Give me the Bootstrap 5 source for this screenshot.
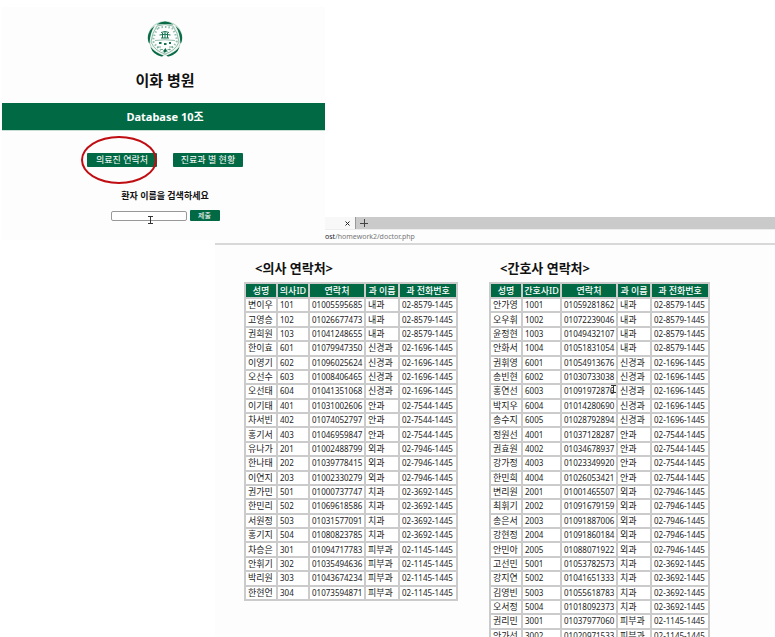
<!DOCTYPE html>
<html lang="ko">
<head>
<meta charset="utf-8">
<meta name="viewport" content="width=device-width, initial-scale=1">
<title>이화 병원</title>
<link href="https://cdn.jsdelivr.net/npm/bootstrap@5.3.0/dist/css/bootstrap.min.css" rel="stylesheet">
<style>
  :root { --ewha: #016a45; }
  body { font-family: "Noto Sans", "Noto Sans CJK KR", sans-serif; color: #111; background: #fff; }
  .desktop { min-height: 100vh; }
  .win-home { left: 2px; top: 7px; width: 323px; height: 233px; padding-top: 14px; background: #fdfdfd; z-index: 2; }
  .win-browser { left: 215px; top: 217px; right: 0; bottom: 0; background: #fdfdfd; }
  .hospital-name { font-size: 15px; line-height: 24px; margin: 11px 0; padding-left: 3px; }
  .team-band { background: var(--ewha); font-size: 11px; line-height: 28px; height: 28px; padding-left: 3px; border-bottom: 1px solid #c5dfd5; }
  .crest { padding-left: 3px; }
  .btn-ewha { background: var(--ewha); color: #fff; border: 0; border-radius: 1px; font-size: 9px; line-height: 14px; padding: 0; width: 70px; }
  .btn-ewha:hover { background: #01583a; color: #fff; }
  .btn-send { font-size: 7px; line-height: 11px; width: 30px; }
  .menu-row { gap: 16px; padding: 22px 0 0 3px; }
  .ring { left: -6px; top: -17px; width: 76px; height: 48px; border: 2px solid #c00d12; border-radius: 50%; pointer-events: none; }
  .search-label { font-size: 9px; line-height: 14px; margin-top: 22px; padding-left: 3px; }
  .search-box { width: 76px; height: 10px; border: 1px solid #999; border-radius: 2px; padding: 0 2px; font-size: 7px; background: #fff; }
  .search-row { gap: 3px; margin-top: 7px; padding-left: 3px; }
  .caret-home { left: 37px; top: 5px; }
  .tab-strip { height: 13px; background: #cacaca; border-bottom: 1px solid #eee; }
  .tab-on { width: 141px; background: #f8f8f8; border-right: 1px solid #999; padding-right: 5px; }
  .tab-btn { border: 0; background: none; padding: 0; line-height: 0; }
  .address { height: 15px; padding-left: 110px; font-size: 7px; line-height: 14px; color: #777; border-bottom: 2px solid #d8d8d8; }
  .address a { color: inherit; }
  .lists { gap: 31px; padding: 14px 0 0 29px; }
  .list-title { font-size: 13px; line-height: 18px; margin: 0 0 5px 11px; }
  .roster { table-layout: fixed; border-collapse: separate; border-spacing: 2px; background: #cbcbcb; color: #222; font-size: 8px; line-height: 12px; }
  .roster-doctor { width: 214px; height: 319px; }
  .roster-nurse { width: 221px; height: 362px; }
  .roster th, .roster td { padding: 0 0 0 2px; white-space: nowrap; vertical-align: middle; }
  .roster th { background: var(--ewha); color: #fff; font-size: 9px; font-weight: 500; text-align: center; padding: 0; height: 13px; }
  .roster td { background: #fff; }
  .roster .ko { font-size: 9px; }
  .c-name { width: 30px; } .c-id { width: 30px; } .c-nid { width: 37px; } .c-tel { width: 54px; } .c-dept { width: 32px; } .c-line { width: 56px; }
  .caret-list { left: 396px; top: 140px; }
</style>
<script src="https://cdn.jsdelivr.net/npm/bootstrap@5.3.0/dist/js/bootstrap.bundle.min.js"></script>
</head>
<body>
<main class="desktop position-relative overflow-hidden">

  <section class="win-home position-absolute text-center">
    <div class="crest">
    <svg class="d-block mx-auto" width="36" height="36" viewBox="0 0 36 36" fill="none" stroke="#2c805f" aria-label="이화" role="img">
      <path d="M9 3Q18-2 27 3Q34 7 35 16Q35 21 33 23Q31 32 22 35L18 33.500L14 35Q5 32 3 23Q1 21 1 16Q2 7 9 3Z" fill="#eef5f1" stroke="#8dbba8" stroke-width=".6"/>
      <g fill="#0a6b46" stroke="none">
        <path d="M9.500 3.500Q18-2.500 26.500 3.500Q18 2.600 9.500 3.500Z"/>
        <path d="M7.500 5Q-.5 11 1.200 20Q1.800 22 2.500 22.500Q3 12 7.500 5Z"/>
        <path d="M28.500 5Q36.500 11 34.800 20Q34.200 22 33.500 22.500Q33 12 28.500 5Z"/>
        <path d="M3.500 26Q6 34 14.500 35.500Q16 35.500 16.500 34.500Q9 32 3.500 26Z"/>
        <path d="M32.500 26Q30 34 21.500 35.500Q20 35.500 19.500 34.500Q27 32 32.500 26Z"/>
      </g>
      <path d="M10 5Q18 2 26 5Q31 12 32 21Q28 30 18 33Q8 30 4 21Q5 12 10 5Z" fill="#fdfdfd" stroke-width=".5"/>
      <path d="M11 7Q18 5 25 7Q29 13 30 20Q26 28 18 31Q10 28 6 20Q7 13 11 7Z" stroke-width="2" stroke-dasharray="1.500 2" opacity=".5"/>
      <path d="M14 11.500Q18 9.500 22 11.500M12.500 14Q18 12.500 23.500 14M14 17H22M15.500 12V17M18 11V17M20.500 12V17" stroke="#15724f" stroke-width="1"/>
      <path d="M8 19.500Q18 18 28 19.500" stroke-width=".5"/>
      <path d="M12 22H14.500M17 23H19.500M22 22H24" stroke="#15724f" stroke-width="1.800"/>
      <path d="M10 26H14M22 26H26M14 28.500H16M20.500 28.500H23" stroke-width=".9" opacity=".7"/>
      <path d="M18.500 27L20 30L17.500 32L16.500 29.500Z" fill="#0a6b46" stroke="none"/>
    </svg>
    </div>
    <h1 class="hospital-name fw-bold">이화 병원</h1>
    <div class="team-band text-white fw-bold">Database 10조</div>
    <nav class="menu-row d-flex justify-content-center">
      <div class="position-relative d-flex">
        <button type="button" class="btn btn-ewha">의료진 연락처</button>
        <span class="ring position-absolute"></span>
      </div>
      <button type="button" class="btn btn-ewha">진료과 별 현황</button>
    </nav>
    <form onsubmit="return false">
      <label class="search-label d-block fw-bold" for="patient">환자 이름을 검색하세요</label>
      <div class="search-row d-flex justify-content-center align-items-center">
        <div class="position-relative d-flex">
          <input class="search-box" id="patient" type="text">
          <svg class="caret-home position-absolute" width="5" height="8" viewBox="0 0 5 8" fill="none" stroke="#333"><path d="M0 .5H5M0 7.500H5M2.500 0V8"/></svg>
        </div>
        <button type="submit" class="btn btn-ewha btn-send">제출</button>
      </div>
    </form>
  </section>

  <section class="win-browser position-absolute overflow-hidden">
    <div class="tab-strip d-flex align-items-stretch">
      <div class="tab-on d-flex align-items-center justify-content-end">
        <button type="button" class="tab-btn" aria-label="탭 닫기"><svg width="5" height="5" viewBox="0 0 5 5" stroke="#222"><path d="M.5 .5L4.500 4.500M4.500 .5L.5 4.500"/></svg></button>
      </div>
      <button type="button" class="tab-btn ps-1" aria-label="새 탭"><svg width="8" height="8" viewBox="0 0 8 8" stroke="#444"><path d="M0 4.500H8M4.500 0V8"/></svg></button>
    </div>
    <div class="address"><a class="text-decoration-none" href="#"><span class="text-dark">ost</span>/homework2/doctor.php</a></div>

    <div class="lists d-flex align-items-start position-relative">
      <div>
        <h2 class="list-title fw-bold">&lt;의사 연락처&gt;</h2>
        <table class="roster roster-doctor">
          <colgroup><col class="c-name"><col class="c-id"><col class="c-tel"><col class="c-dept"><col class="c-line"></colgroup>
          <thead><tr><th>성명</th><th>의사ID</th><th>연락처</th><th>과 이름</th><th>과 전화번호</th></tr></thead>
          <tbody id="doctors"></tbody>
        </table>
      </div>
      <div>
        <h2 class="list-title fw-bold">&lt;간호사 연락처&gt;</h2>
        <table class="roster roster-nurse">
          <colgroup><col class="c-name"><col class="c-nid"><col class="c-tel"><col class="c-dept"><col class="c-line"></colgroup>
          <thead><tr><th>성명</th><th>간호사ID</th><th>연락처</th><th>과 이름</th><th>과 전화번호</th></tr></thead>
          <tbody id="nurses"></tbody>
        </table>
      </div>
      <svg class="caret-list position-absolute" width="5" height="8" viewBox="0 0 5 8" fill="none" stroke="#333"><path d="M0 .5H5M0 7.500H5M2.500 0V8"/></svg>
    </div>
  </section>
</main>

<script>
  // The first digit of an ID gives the department.
  const departments = {
    1: ['내과', '02-8579-1445'], 2: ['외과', '02-7946-1445'], 3: ['피부과', '02-1145-1445'],
    4: ['안과', '02-7544-1445'], 5: ['치과', '02-3692-1445'], 6: ['신경과', '02-1696-1445']
  };
  const doctors = `변이우 101 01005595685
고영승 102 01026677473
권희원 103 01041248655
한이효 601 01079947350
이영기 602 01096025624
오선수 603 01008406465
오선태 604 01041351068
이기태 401 01031002606
차서빈 402 01074052797
홍기서 403 01046959847
유나가 201 01002488799
한나태 202 01039778415
이연지 203 01002330279
권가민 501 01000737747
한민리 502 01069618586
서원정 503 01031577091
홍기지 504 01080823785
차승은 301 01094717783
안휘기 302 01035494636
박리원 303 01043674234
한현언 304 01073594871`;
  const nurses = `안가영 1001 01059281862
오우휘 1002 01072239046
윤정현 1003 01049432107
안화서 1004 01051831054
권휘영 6001 01054913676
송빈현 6002 01030733038
홍연선 6003 01091972876
박지우 6004 01014280690
송수지 6005 01028792894
정원선 4001 01037128287
권효원 4002 01034678937
강가정 4003 01023349920
한민희 4004 01026053421
변리원 2001 01001465507
최휘기 2002 01091679159
송은서 2003 01091887006
강현정 2004 01091860184
안민아 2005 01088071922
고선민 5001 01053782573
강지연 5002 01041651333
김영빈 5003 01055618783
오서정 5004 01018092373
권리민 3001 01037977060
안가선 3002 01020971533`;
  function fill(id, text) {
    document.getElementById(id).innerHTML = text.split('\n').map(line => {
      const [name, no, tel] = line.trim().split(' ');
      const [dept, phone] = departments[no[0]];
      return `<tr><td class="ko">${name}</td><td>${no}</td><td>${tel}</td><td class="ko">${dept}</td><td>${phone}</td></tr>`;
    }).join('');
  }
  fill('doctors', doctors);
  fill('nurses', nurses);
</script>
</body>
</html>
